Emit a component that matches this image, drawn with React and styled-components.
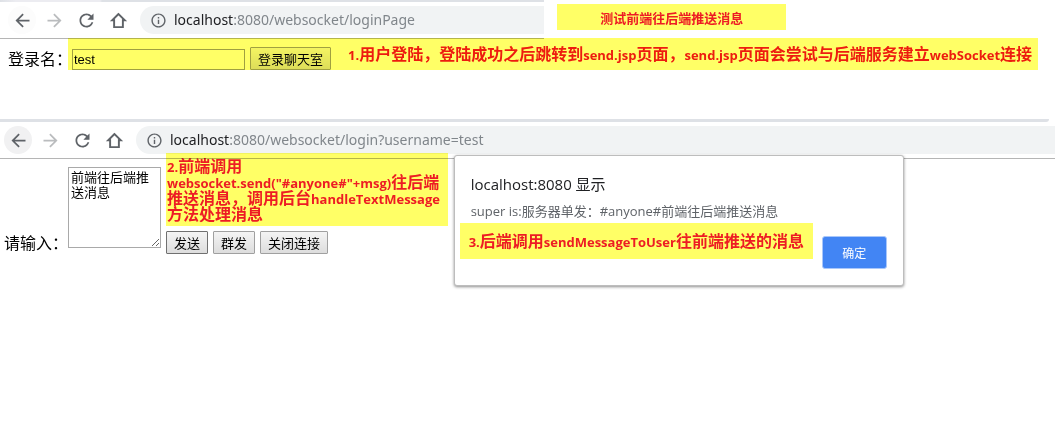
import React from "react";
import styled, { createGlobalStyle } from "styled-components";

const GlobalStyle = createGlobalStyle`
  * { box-sizing: border-box; }
  body { margin: 0; background: #fff; color: #000; }
`;

const cjk = `"Noto Sans CJK SC", sans-serif`;
const ui = `"Open Sans", ${cjk}`;

const Page = styled.main`
  display: flex;
  flex-direction: column;
  gap: 49px;
  min-height: 100vh;
  background: #fff;
  isolation: isolate;
  font: 16px/24px ${cjk};
`;

const LoginView = styled.section`
  display: flex;
  flex-direction: column;
`;

const TopRow = styled.div`
  display: flex;
  align-items: flex-start;
`;

const BrowserFrame = styled.div`
  flex: ${(p) => (p.$part ? "0 0 auto" : "1 1 auto")};
  width: ${(p) => (p.$part ? "51.6%" : "auto")};
  border-bottom: 1px solid #b5b5b5;
`;

const TabStrip = styled.div`
  height: ${(p) => p.$height}px;
  margin-right: ${(p) => p.$inset || 0}px;
  border-bottom-right-radius: ${(p) => (p.$inset ? 3 : 0)}px;
  background: ${(p) =>
    p.$tab ? "linear-gradient(90deg, #dee1e6, #ececf1 16px 100px, #dee1e6 102px)" : "#dee1e6"};
`;

const Toolbar = styled.div`
  display: flex;
  align-items: center;
  gap: 4px;
  padding: 4px 0 4px ${(p) => p.$start}px;
`;

const NavButton = styled.button`
  display: grid;
  place-items: center;
  width: 28px;
  height: 28px;
  padding: 0;
  border: 0;
  border-radius: 50%;
  background: ${(p) => p.$fill || "transparent"};
  color: ${(p) => (p.disabled ? "#babcbe" : "#5f6368")};
`;

const AddressBar = styled.div`
  display: flex;
  flex: 1;
  align-items: center;
  gap: 7px;
  min-width: 0;
  height: 28px;
  margin-left: 4px;
  padding-left: 10px;
  border-radius: 14px 0 0 14px;
  background: #f1f3f4;
  color: #5f6368;
`;

const Url = styled.span`
  font: 14px/20px "Noto Sans", ${cjk};
  white-space: nowrap;
  color: #80868b;
`;

const Host = styled.span`
  color: #202124;
`;

const Note = styled.p`
  margin: 0;
  background: #ffff66;
  color: #ed1c24;
  font: 700 ${(p) => p.$size || 16}px/16px ${cjk};
  white-space: nowrap;
  mix-blend-mode: multiply;
`;

const Latin = styled.span`
  font: 700 13px/0 ${ui};
`;

const Banner = styled(Note)`
  width: 229px;
  margin: 4px 0 0 13px;
  padding: 6px 0 4px;
  text-align: center;
`;

const DialogNote = styled(Note)`
  width: 353px;
  padding: 9px 0 11px 9px;
`;

const StepNote = styled(Note)`
  width: 282px;
  margin: -6px 0 5px;
  padding: 4px 0 5px 1px;
`;

const LoginForm = styled.form`
  display: flex;
  align-items: flex-end;
  margin-right: 17px;
  padding-left: 8px;
`;

const FieldLabel = styled.label`
  width: 60px;
  white-space: nowrap;
`;

const Highlighted = styled.div`
  display: flex;
  flex: 1;
  align-items: flex-end;
  gap: 5px;
  height: 32px;
  margin-top: -1px;
  padding-left: 4px;
  background: #ffff66;
  mix-blend-mode: multiply;
`;

const NameInput = styled.input`
  width: 173px;
  height: 21px;
  padding: 1px;
  border: 1px solid #a0a040;
  background: transparent;
  font: 13px/16px "Liberation Sans", sans-serif;
`;

const NativeButton = styled.button`
  height: 23px;
  padding: 0 7px;
  border: 1px solid ${(p) => (p.$focus ? "#707070" : "#a0a0a0")};
  border-radius: 1px;
  background: linear-gradient(#f4f4f4, #dddddd);
  color: #000;
  font: 13px/20px ${cjk};
  white-space: nowrap;
  mix-blend-mode: multiply;
`;

const LoginNote = styled(Note)`
  margin-left: 12px;
  padding-bottom: 9px;
  background: transparent;
`;

const ChatView = styled.section`
  position: relative;
`;

const ChatForm = styled.form`
  display: flex;
  align-items: flex-start;
  padding-left: 4px;
`;

const MessageLabel = styled.label`
  width: 64px;
  margin-top: 71px;
  white-space: nowrap;
`;

const MessageBox = styled.textarea`
  width: 93px;
  height: 81px;
  margin: 8px 5px 0 0;
  padding: 1px 3px 1px 2px;
  border: 1px solid #a9a9a9;
  font: 13px/15px ${cjk};
`;

const ButtonRow = styled.div`
  display: flex;
  gap: 5px;
`;

const Dialog = styled.div`
  position: absolute;
  top: 36px;
  left: 43%;
  width: 450px;
  padding: 18px 0 16px;
  border: 1px solid #bdbdbd;
  border-radius: 3px;
  background: #fff;
  box-shadow: 0 1px 3px rgba(0, 0, 0, 0.45);
`;

const DialogTitle = styled.h2`
  margin: 0 16px 7px;
  color: #202124;
  font: 400 15px/20px ${ui};
`;

const DialogText = styled.p`
  margin: 0 16px 2px;
  color: #5f6368;
  font: 13px/20px ${ui};
  white-space: nowrap;
`;

const DialogFooter = styled.div`
  display: flex;
  align-items: flex-start;
  justify-content: space-between;
  padding: 0 16px 0 5px;
`;

const ConfirmButton = styled.button`
  width: 65px;
  height: 33px;
  margin-top: 13px;
  padding: 0;
  border: 1px solid #a9c7fa;
  border-radius: 3px;
  background: #4285f4;
  color: #fff;
  font: 12px/20px ${cjk};
`;

const Icon = ({ size = 21, children }) => (
  <svg width={size} height={size} viewBox="0 0 24 24" fill="currentColor" aria-hidden="true">
    {children}
  </svg>
);

function Browser({ part, start, strip, inset, backFill, path }) {
  return (
    <BrowserFrame $part={part}>
      <TabStrip $height={strip} $inset={inset} $tab={part} />
      <Toolbar $start={start}>
        <NavButton type="button" aria-label="Back" $fill={backFill}>
          <Icon>
            <path d="M20 11H7.83l5.59-5.59L12 4l-8 8 8 8 1.41-1.41L7.83 13H20v-2z" />
          </Icon>
        </NavButton>
        <NavButton type="button" aria-label="Forward" disabled>
          <Icon>
            <path d="M12 4l-1.41 1.41L16.17 11H4v2h12.17l-5.58 5.59L12 20l8-8z" />
          </Icon>
        </NavButton>
        <NavButton type="button" aria-label="Reload">
          <Icon>
            <path d="M17.65 6.35C16.2 4.9 14.21 4 12 4c-4.42 0-7.99 3.58-7.99 8s3.57 8 7.99 8c3.73 0 6.84-2.55 7.73-6h-2.08c-.82 2.33-3.04 4-5.65 4-3.31 0-6-2.69-6-6s2.69-6 6-6c1.66 0 3.14.69 4.22 1.78L13 11h7V4l-2.35 2.35z" />
          </Icon>
        </NavButton>
        <NavButton type="button" aria-label="Home">
          <Icon>
            <path
              d="M12 4.6L4.8 11.7H7V19.6H17V11.7H19.2Z"
              fill="none"
              stroke="currentColor"
              strokeWidth="2.2"
            />
          </Icon>
        </NavButton>
        <AddressBar>
          <Icon size={17}>
            <path d="M11 7h2v2h-2zm0 4h2v6h-2zm1-9C6.48 2 2 6.48 2 12s4.48 10 10 10 10-4.48 10-10S17.52 2 12 2zm0 18c-4.41 0-8-3.59-8-8s3.59-8 8-8 8 3.59 8 8-3.59 8-8 8z" />
          </Icon>
          <Url>
            <Host>localhost</Host>
            {path}
          </Url>
        </AddressBar>
      </Toolbar>
    </BrowserFrame>
  );
}

export default function App() {
  return (
    <>
      <GlobalStyle />
      <Page>
        <LoginView>
          <TopRow>
            <Browser part start={8} strip={2} backFill="#fcfcfc" path=":8080/websocket/loginPage" />
            <Banner $size={13}>测试前端往后端推送消息</Banner>
          </TopRow>
          <LoginForm onSubmit={(e) => e.preventDefault()}>
            <FieldLabel htmlFor="username">登录名：</FieldLabel>
            <Highlighted>
              <NameInput id="username" defaultValue="test" />
              <NativeButton type="submit">登录聊天室</NativeButton>
              <LoginNote>
                <Latin>1.</Latin>用户登陆，登陆成功之后跳转到<Latin>send.jsp</Latin>页面，
                <Latin>send.jsp</Latin>页面会尝试与后端服务建立<Latin>webSocket</Latin>连接
              </LoginNote>
            </Highlighted>
          </LoginForm>
        </LoginView>
        <ChatView>
          <Browser start={4} strip={3} inset={6} backFill="#f1f1f2" path=":8080/websocket/login?username=test" />
          <ChatForm onSubmit={(e) => e.preventDefault()}>
            <MessageLabel htmlFor="message">请输入：</MessageLabel>
            <MessageBox id="message" defaultValue="前端往后端推送消息" />
            <div>
              <StepNote>
                <Latin>2.</Latin>前端调用
                <br />
                <Latin>websocket.send("#anyone#"+msg)</Latin>往后端
                <br />
                推送消息，调用后台<Latin>handleTextMessage</Latin>
                <br />
                方法处理消息
              </StepNote>
              <ButtonRow>
                <NativeButton type="submit" $focus>发送</NativeButton>
                <NativeButton type="button">群发</NativeButton>
                <NativeButton type="button">关闭连接</NativeButton>
              </ButtonRow>
            </div>
          </ChatForm>
          <Dialog role="dialog" aria-labelledby="dialog-title">
            <DialogTitle id="dialog-title">localhost:8080 显示</DialogTitle>
            <DialogText>super is:服务器单发：#anyone#前端往后端推送消息</DialogText>
            <DialogFooter>
              <DialogNote>
                <Latin>3.</Latin>后端调用<Latin>sendMessageToUser</Latin>往前端推送的消息
              </DialogNote>
              <ConfirmButton type="button">确定</ConfirmButton>
            </DialogFooter>
          </Dialog>
        </ChatView>
      </Page>
    </>
  );
}
